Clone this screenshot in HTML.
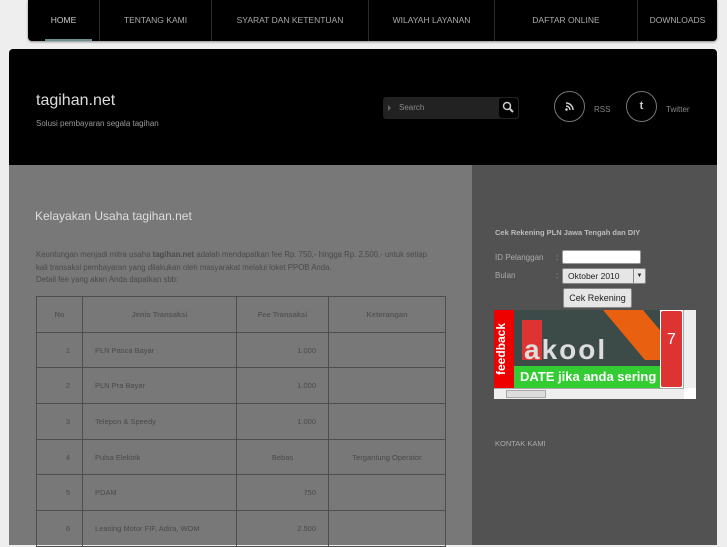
<!DOCTYPE html>
<html><head><meta charset="utf-8"><style>
*{margin:0;padding:0;box-sizing:border-box}
body{width:727px;height:545px;overflow:hidden;background:#eeeeee;font-family:"Liberation Sans",sans-serif;position:relative}
.a{position:absolute}
#nav{left:28px;top:0;width:689px;height:41px;background:#000;border-radius:0 0 4px 4px;box-shadow:0 1px 2px #888}
#nav div{position:absolute;top:0;height:41px;border-right:1px solid #2a2a2a;color:#aaa;font-size:8.5px;line-height:41px;text-align:center}
#hdr{left:9px;top:49px;width:708px;height:117px;background:#000;border-radius:4px 4px 0 0}
#main{left:9px;top:165px;width:463px;height:380px;background:#787878}
#side{left:472px;top:165px;width:245px;height:380px;background:#525252}
table{position:absolute;left:36px;top:296px;border-collapse:collapse;font-size:7.5px;color:#4a4a4a}
td{border:1px solid #4e4e4e;height:35.7px;padding:0 12px}
th{border:1px solid #4e4e4e;height:35.7px;font-size:7.5px;color:#555}
</style></head><body>
<div id="nav" class="a">
<div style="left:0;width:72px;color:#ccc">HOME<span style="position:absolute;left:17px;top:39px;width:47px;height:2px;background:#6b8f8f"></span></div>
<div style="left:72px;width:112px">TENTANG KAMI</div>
<div style="left:184px;width:157px">SYARAT DAN KETENTUAN</div>
<div style="left:341px;width:126px">WILAYAH LAYANAN</div>
<div style="left:467px;width:143px">DAFTAR ONLINE</div>
<div style="left:610px;width:79px;border:none">DOWNLOADS</div>
</div>
<div id="hdr" class="a">
<div class="a" style="left:27px;top:43px;font-size:16px;color:#ddd">tagihan.net</div>
<div class="a" style="left:27px;top:70px;font-size:8px;color:#999">Solusi pembayaran segala tagihan</div>
<div class="a" style="left:374px;top:48px;width:136px;height:22px;background:#222;border-radius:3px"><span class="a" style="left:16px;top:6px;font-size:8px;color:#888">Search</span><span class="a" style="left:5px;top:8px;border-left:3px solid #666;border-top:3px solid transparent;border-bottom:3px solid transparent"></span>
<div class="a" style="right:1px;top:1px;width:19px;height:20px;background:#000;border-radius:3px"><svg width="19" height="20"><circle cx="8" cy="8" r="3.5" stroke="#ccc" stroke-width="1.5" fill="none"/><path d="M10.5 10.5L14 14" stroke="#ccc" stroke-width="2"/></svg></div></div>
<div class="a" style="left:545px;top:42px;width:31px;height:31px;border:1px solid #777;border-radius:50%"><svg width="29" height="29"><circle cx="11.5" cy="17.5" r="1.3" fill="#ccc"/><path d="M11 14a4 4 0 0 1 4 4M11 11a7 7 0 0 1 7 7" stroke="#ccc" stroke-width="1.5" fill="none"/></svg></div>
<div class="a" style="left:585px;top:56px;font-size:8px;color:#888">RSS</div>
<div class="a" style="left:617px;top:42px;width:31px;height:31px;border:1px solid #777;border-radius:50%;color:#ccc;font-size:11px;text-align:center;line-height:29px;font-weight:bold">t</div>
<div class="a" style="left:657px;top:56px;font-size:8px;color:#888">Twitter</div>
</div>
<div id="main" class="a"></div>
<div id="side" class="a"></div>
<div class="a" style="left:35px;top:209px;font-size:12px;color:#ddd">Kelayakan Usaha tagihan.net</div>
<div class="a" style="left:36px;top:249px;font-size:7.8px;line-height:12.5px;color:#4a4a4a;width:404px">Keuntungan menjadi mitra usaha <b>tagihan.net</b> adalah mendapatkan fee Rp. 750,- hingga Rp. 2.500,- untuk setiap kali transaksi pembayaran yang dilakukan oleh masyarakat melalui loket PPOB Anda.<br>Detail fee yang akan Anda dapatkan sbb:</div>
<table>
<tr><th style="width:46px">No</th><th style="width:154px">Jenis Transaksi</th><th style="width:92px">Fee Transaksi</th><th style="width:117px">Keterangan</th></tr>
<tr><td style="text-align:right">1</td><td>PLN Pasca Bayar</td><td style="text-align:right">1.000</td><td></td></tr>
<tr><td style="text-align:right">2</td><td>PLN Pra Bayar</td><td style="text-align:right">1.000</td><td></td></tr>
<tr><td style="text-align:right">3</td><td>Telepon &amp; Speedy</td><td style="text-align:right">1.000</td><td></td></tr>
<tr><td style="text-align:right">4</td><td>Pulsa Elektrik</td><td style="text-align:center">Bebas</td><td style="text-align:center;padding:0">Tergantung Operator</td></tr>
<tr><td style="text-align:right">5</td><td>PDAM</td><td style="text-align:right">750</td><td></td></tr>
<tr><td style="text-align:right">6</td><td>Leasing Motor FIF, Adira, WOM</td><td style="text-align:right">2.500</td><td></td></tr>
</table>
<div class="a" style="left:495px;top:228px;font-size:7.5px;font-weight:bold;color:#bbb">Cek Rekening PLN Jawa Tengah dan DIY</div>
<div class="a" style="left:495px;top:253px;font-size:8px;color:#aaa">ID Pelanggan</div>
<div class="a" style="left:556px;top:253px;font-size:8px;color:#aaa">:</div>
<div class="a" style="left:562px;top:250px;width:79px;height:14px;background:#fff;border:1px solid #999;border-radius:2px"></div>
<div class="a" style="left:495px;top:271px;font-size:8px;color:#aaa">Bulan</div>
<div class="a" style="left:556px;top:271px;font-size:8px;color:#aaa">:</div>
<div class="a" style="left:562px;top:268px;width:84px;height:16px;background:#e6e6e6;border:1px solid #888;border-radius:2px;font-size:8.5px;color:#222;padding:2px 5px">Oktober 2010<span class="a" style="right:0;top:0;width:12px;height:14px;border-left:1px solid #888;font-size:6px;text-align:center;line-height:14px">&#9660;</span></div>
<div class="a" style="left:563px;top:288px;width:69px;height:20px;background:#e6e6e6;border:1px solid #888;border-radius:2px;font-size:9px;color:#222;text-align:center;line-height:18px">Cek Rekening</div>
<div class="a" style="left:494px;top:310px;width:202px;height:89px;background:#fff;overflow:hidden">
<div class="a" style="left:0;top:0;width:166px;height:78px;background:#3c4a48"></div>
<div class="a" style="left:28px;top:10px;width:20px;height:40px;background:#d33"></div>
<div class="a" style="left:30px;top:24px;font-size:28px;font-weight:bold;color:#ddd;letter-spacing:2px">akool</div>
<div class="a" style="left:130px;top:0;width:40px;height:50px;background:#e86010;transform:skewX(40deg)"></div>
<div class="a" style="left:0;top:56px;width:166px;height:22px;background:#33cc33;color:#fff;font-size:13px;font-weight:bold;line-height:22px;padding-left:26px;white-space:nowrap">DATE jika anda sering log</div>
<div class="a" style="left:0;top:0;width:20px;height:78px;background:#e00;color:#fff;font-size:12px;font-weight:bold;writing-mode:vertical-rl;transform:rotate(180deg);text-align:center">feedback</div>
<div class="a" style="left:166px;top:0;width:23px;height:78px;background:#d33;border:1px solid #fff;border-radius:3px;color:#fff;font-size:16px;text-align:center;padding-top:20px">7</div>
<div class="a" style="left:189px;top:0;width:13px;height:78px;background:#eee;border-left:1px solid #aaa"></div>
<div class="a" style="left:0;top:78px;width:190px;height:11px;background:#eee;border-top:1px solid #aaa"><div class="a" style="left:12px;top:1px;width:40px;height:8px;background:#ddd;border:1px solid #aaa"></div></div>
</div>
<div class="a" style="left:495px;top:439px;font-size:7.5px;color:#aaa">KONTAK KAMI</div>
</body></html>
